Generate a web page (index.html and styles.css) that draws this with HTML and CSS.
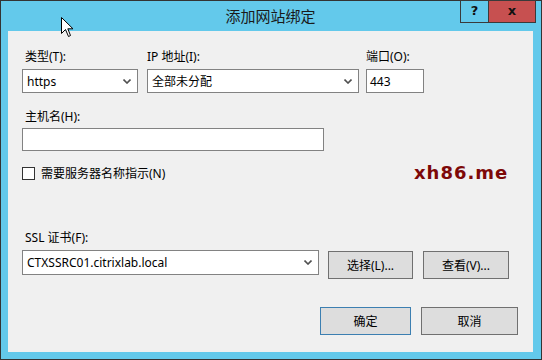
FILE: index.html
```html
<!DOCTYPE html>
<html lang="zh-CN">
<head>
    <meta charset="UTF-8">
    <meta name="viewport" content="width=device-width, initial-scale=1.0">
    <title>添加网站绑定</title>
    <link rel="stylesheet" href="styles.css">
</head>
<body>
    <div class="window">
        <div class="titlebar">
            <span class="title">添加网站绑定</span>
            <div class="controls">
                <span class="ctl help">?</span>
                <span class="ctl close">x</span>
            </div>
        </div>
        <div class="content">
            <div class="row-fields">
                <div class="field type">
                    <div class="label indent">类型(T):</div>
                    <div class="combo">
                        <span>https</span>
                        <svg class="chev" width="8" height="5" viewBox="0 0 8 5"><polyline points="0.5,0.5 4,4 7.5,0.5" fill="none" stroke="#505050" stroke-width="1.6"/></svg>
                    </div>
                </div>
                <div class="field ip">
                    <div class="label">IP 地址(I):</div>
                    <div class="combo">
                        <span>全部未分配</span>
                        <svg class="chev" width="8" height="5" viewBox="0 0 8 5"><polyline points="0.5,0.5 4,4 7.5,0.5" fill="none" stroke="#505050" stroke-width="1.6"/></svg>
                    </div>
                </div>
                <div class="field port">
                    <div class="label">端口(O):</div>
                    <div class="textbox">443</div>
                </div>
            </div>

            <div class="label indent host-label">主机名(H):</div>
            <div class="textbox host"></div>

            <div class="check-row">
                <span class="checkbox"></span>
                <span>需要服务器名称指示(N)</span>
            </div>

            <div class="label indent ssl-label">SSL 证书(F):</div>
            <div class="ssl-row">
                <div class="combo ssl">
                    <span>CTXSSRC01.citrixlab.local</span>
                    <svg class="chev" width="8" height="5" viewBox="0 0 8 5"><polyline points="0.5,0.5 4,4 7.5,0.5" fill="none" stroke="#505050" stroke-width="1.6"/></svg>
                </div>
                <button class="btn pick">选择(L)...</button>
                <button class="btn view">查看(V)...</button>
            </div>

            <div class="actions">
                <button class="btn ok">确定</button>
                <button class="btn cancel">取消</button>
            </div>
        </div>
        <div class="watermark">xh86.me</div>
        <svg class="cursor" width="13" height="21" viewBox="0 0 13 21">
            <path d="M0.5,0.5 L0.5,16.5 L4.5,12.5 L7.5,19.5 L9.5,18.5 L6.8,11.8 L12,11.8 Z" fill="#fff" stroke="#000" stroke-width="1"/>
        </svg>
    </div>
</body>
</html>
```

FILE: styles.css
```css
body {
    margin: 0;
    font-family: "Noto Sans", "Noto Sans CJK SC", sans-serif;
    font-size: 12px;
    color: #000;
    background-color: #fff;
}
.window {
    position: relative;
    width: 542px;
    height: 360px;
    box-sizing: border-box;
    border: 1px solid #333;
    background-color: #63c9eb;
    padding: 0 8px 7px 7px;
}
.titlebar {
    height: 30px;
    line-height: 30px;
    text-align: center;
}
.title {
    font-family: "Noto Sans CJK SC", sans-serif;
    font-size: 15px;
    color: #1a1a1a;
}
.controls {
    position: absolute;
    top: -1px;
    right: 5px;
    display: flex;
}
.ctl {
    height: 21px;
    line-height: 19px;
    border: 1px solid #3a3a3a;
    text-align: center;
    font-family: "DejaVu Sans", sans-serif;
    font-weight: bold;
    font-size: 13px;
    color: #111;
}
.help {
    width: 27px;
    border-right: none;
}
.close {
    width: 46px;
    background-color: #c75050;
}

.content {
    height: 321px;
    background-color: #f0f0f0;
    padding: 18px 0 0 14px;
    box-sizing: border-box;
}
.label {
    line-height: 16px;
    height: 16px;
    margin-bottom: 4px;
}
.label.indent {
    padding-left: 3px;
}
.row-fields {
    display: flex;
}
.field.ip {
    margin-left: 9px;
}
.field.port {
    margin-left: 7px;
}
.combo,
.textbox {
    box-sizing: border-box;
    height: 24px;
    border: 1px solid #828282;
    background-color: #fff;
    display: flex;
    align-items: center;
    padding: 0 4px;
}
.combo span {
    flex: 1;
}
.chev {
    margin-right: 2px;
}
.type .combo {
    width: 116px;
}
.ip .combo {
    width: 212px;
}
.port .textbox {
    width: 58px;
    padding: 0 3px;
}
.host-label {
    margin-top: 16px;
    margin-bottom: 3px;
}
.textbox.host {
    width: 302px;
    height: 23px;
}
.check-row {
    margin-top: 15px;
    display: flex;
    align-items: center;
    line-height: 15px;
}
.checkbox {
    width: 13px;
    height: 13px;
    box-sizing: border-box;
    border: 1px solid #333;
    background-color: #fff;
    margin-right: 6px;
}
.ssl-label {
    margin-top: 49px;
}
.ssl-row {
    display: flex;
    align-items: flex-start;
}
.combo.ssl {
    width: 297px;
    height: 25px;
}
.btn {
    box-sizing: border-box;
    height: 28px;
    border: 1px solid #707070;
    background-color: #dddddd;
    font-family: "Noto Sans", "Noto Sans CJK SC", sans-serif;
    font-size: 12px;
    color: #000;
    padding: 0;
}
.btn.pick {
    width: 85px;
    margin-left: 9px;
    margin-top: 1px;
}
.btn.view {
    width: 86px;
    margin-left: 10px;
    margin-top: 1px;
}
.actions {
    margin-top: 28px;
    display: flex;
    justify-content: flex-end;
    padding-right: 15px;
}
.btn.ok {
    width: 91px;
    border-color: #3c7fb1;
}
.btn.cancel {
    width: 97px;
    margin-left: 10px;
}

.watermark {
    position: absolute;
    left: 413px;
    top: 161px;
    font-family: "DejaVu Sans", sans-serif;
    font-weight: bold;
    font-size: 18px;
    letter-spacing: 1px;
    color: #7d0808;
}
.cursor {
    position: absolute;
    left: 60px;
    top: 16px;
}
```
